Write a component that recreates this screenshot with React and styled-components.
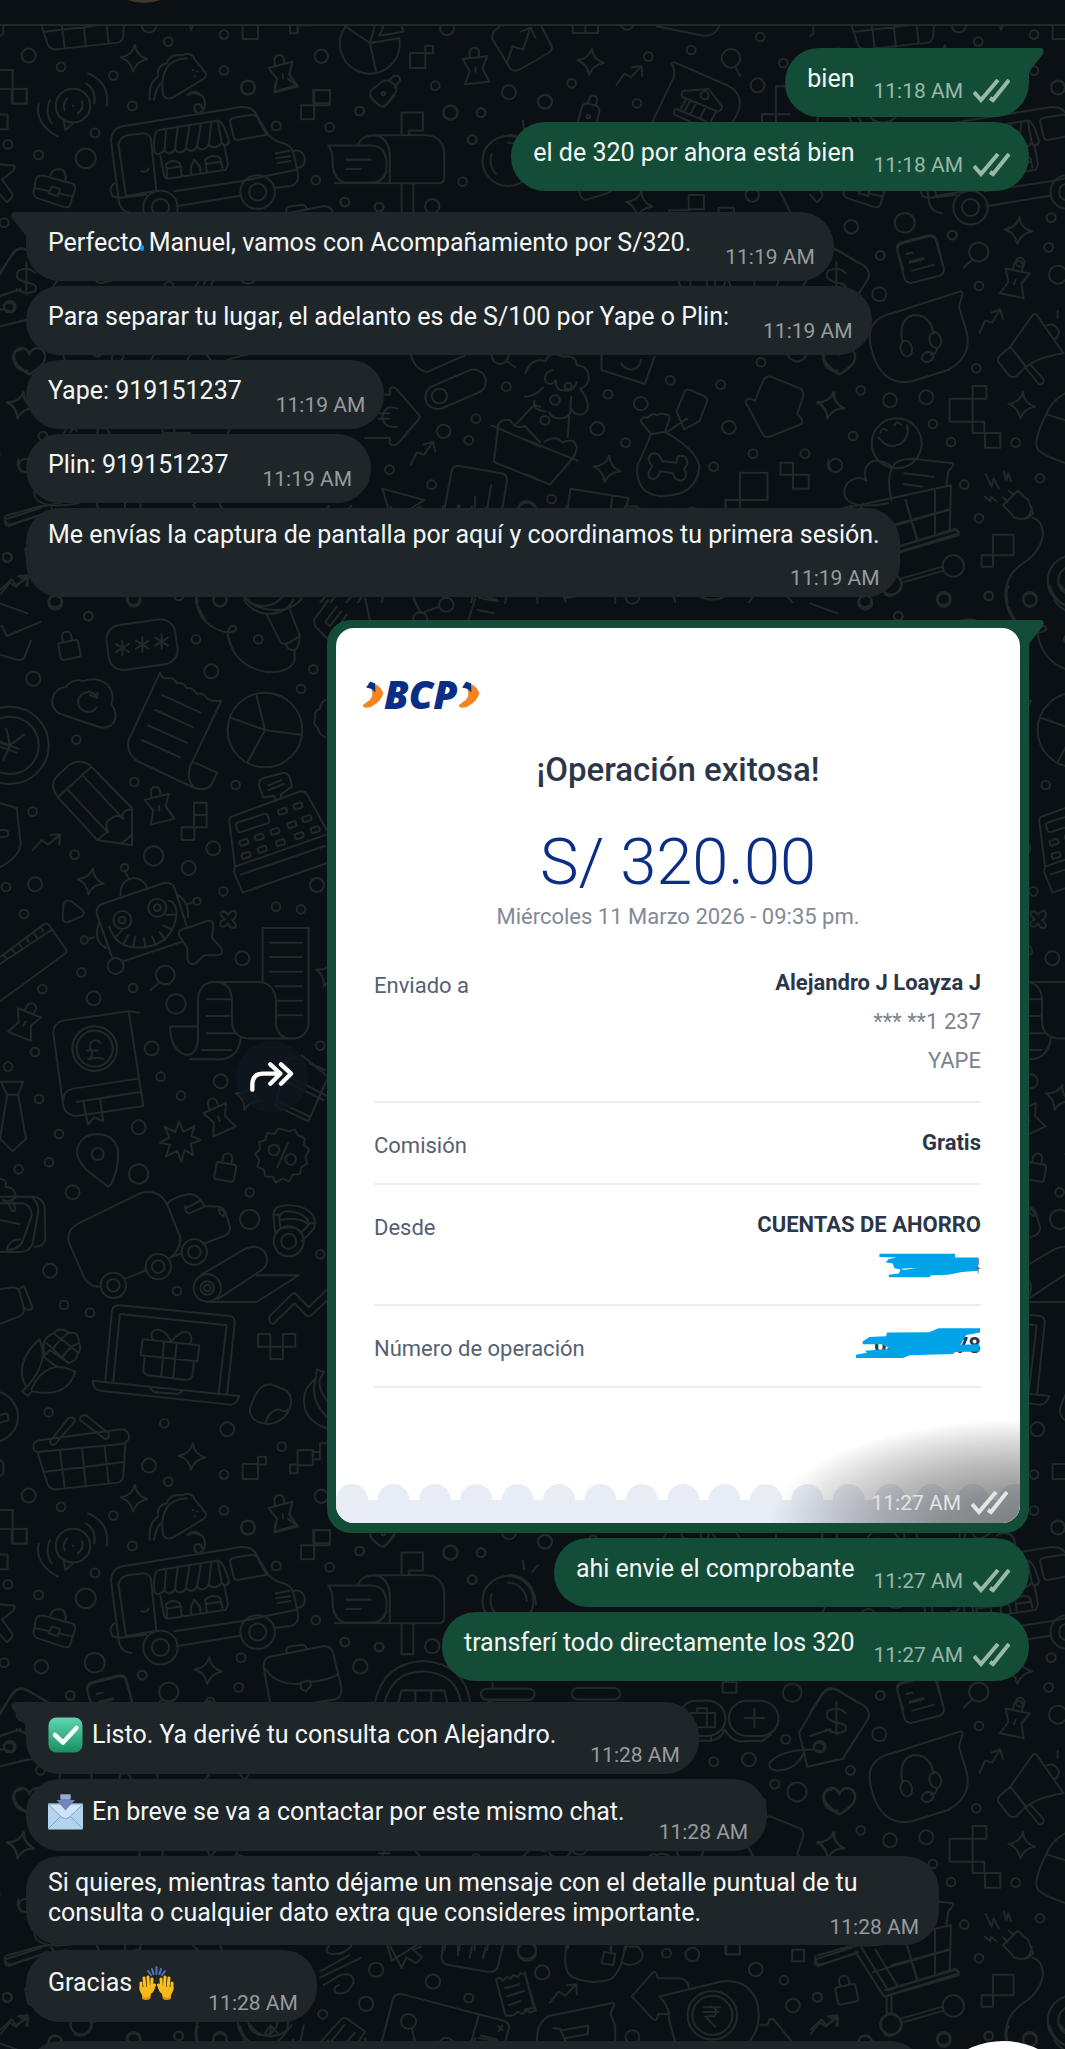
import React from "react";
import styled, { createGlobalStyle, css } from "styled-components";

const GlobalStyle = createGlobalStyle`
  * { box-sizing: border-box; }
  body { margin: 0; background: #0b1014; font-family: Roboto, "Liberation Sans", sans-serif; }
`;

const Screen = styled.div`
  position: relative;
  display: flex;
  flex-direction: column;
  height: 100vh;
  overflow: hidden;
  background: #0b1014;
  color: #f4f6f6;
`;

const TopBar = styled.header`
  position: relative;
  flex: none;
  display: flex;
  align-items: flex-end;
  height: 26px;
  padding: 0 0 21px 98px;
  overflow: hidden;
  background: #0b1014;
  border-bottom: 2px solid #22272a;
`;

const Avatar = styled.span`
  flex: none;
  width: 92px;
  height: 92px;
  border-radius: 50%;
  background: #42352a;
`;

const Wallpaper = styled.svg`
  position: absolute;
  inset: 0;
  width: 100%;
  height: 100%;
  fill: none;
  stroke: #23282b;
  stroke-width: 6;
  stroke-linecap: round;
  stroke-linejoin: round;
`;

const Thread = styled.main`
  position: relative;
  flex: 1;
  min-height: 0;
  display: flex;
  flex-direction: column;
  gap: 21px;
  padding: 22px 36px 0 26px;
`;

const Group = styled.section`
  flex: none;
  display: flex;
  flex-direction: column;
  gap: 5px;
  align-items: ${(p) => (p.$out ? "flex-end" : "flex-start")};
`;

const layouts = {
  out: css`padding: 16px 19px 14px 22px;`,
  in: css`padding: 16px 19px 12px 22px;`,
  emoji: css`padding: 18px 19px 7px 22px;`,
  stacked: css`padding: 12px 20px 7px 22px; flex-direction: column;`,
  wrapped: css`padding: 12px 20px 6px 22px; display: grid; max-width: calc(100% - 90px);`,
};

const metaOffsets = { out: 15, in: 17, emoji: 23, stacked: 16, wrapped: 47 };

const BubbleBox = styled.article`
  position: relative;
  display: flex;
  align-items: flex-start;
  column-gap: ${(p) => (p.$out ? 19 : 34)}px;
  border-radius: 34px;
  background: ${(p) => (p.$out ? "#144d37" : "#1f2629")};
  ${(p) => layouts[p.$layout]}
  ${(p) => p.$tail && (p.$out ? "border-top-right-radius: 0;" : "border-top-left-radius: 0;")}
`;

const TailShape = styled.svg`
  position: absolute;
  top: 0;
  width: 16px;
  height: 26px;
  fill: ${(p) => (p.$out ? "#144d37" : "#1f2629")};
  ${(p) => (p.$out ? "left: calc(100% - 1px);" : "right: calc(100% - 1px); transform: scaleX(-1);")}
`;

const Words = styled.p`
  margin: 0;
  font-size: 25px;
  line-height: 30px;
  ${(p) => p.$fill && "grid-area: 1 / 1;"}
`;

const WithIcon = styled.span`
  display: flex;
  align-items: center;
  height: 30px;
  gap: ${(p) => p.$gap}px;
`;

const Meta = styled.span`
  display: flex;
  align-items: center;
  gap: 10px;
  margin-top: ${(p) => p.$offset}px;
  font-size: 21px;
  line-height: 24px;
  white-space: nowrap;
  color: ${(p) => p.$color};
  ${(p) => p.$corner && "align-self: flex-end; justify-self: end;"}
  ${(p) => p.$fill && "grid-area: 1 / 1;"}
`;

const TickSvg = styled.svg`
  width: 37px;
  height: 24px;
  fill: none;
  stroke: currentColor;
  stroke-width: 4;
`;

const Anchor = styled.span`
  position: relative;
`;

const PenDot = styled.span`
  position: absolute;
  right: -2px;
  bottom: 6px;
  width: 4px;
  height: 6px;
  border-radius: 2px;
  background: #0c9be0;
`;

const Ticks = () => (
  <TickSvg viewBox="0 0 37 24" role="img" aria-label="Entregado">
    <path d="M1 13 8 21 25 1M17 19l3 2L36 1" />
  </TickSvg>
);

const Tail = ({ out }) => (
  <TailShape $out={out} viewBox="0 0 16 26" aria-hidden="true">
    <path d="M0 0H13Q17 1 15 6L4 20Q1 23 1 26H0Z" />
  </TailShape>
);

function Bubble({ out, tail, layout, time, children }) {
  const kind = layout || (out ? "out" : "in");
  const fill = kind === "wrapped";
  return (
    <BubbleBox $out={out} $tail={tail} $layout={kind}>
      {tail && <Tail out={out} />}
      <Words $fill={fill}>{children}</Words>
      <Meta
        $offset={metaOffsets[kind]}
        $color={out ? "#98b8a9" : "#979b9d"}
        $corner={fill || kind === "stacked"}
        $fill={fill}
      >
        <time>{time}</time>
        {out && <Ticks />}
      </Meta>
    </BubbleBox>
  );
}

/* ---------- emoji ---------- */

const EmojiSvg = styled.svg`
  flex: none;
  width: 35px;
  height: 36px;
`;

const CheckEmoji = () => (
  <EmojiSvg viewBox="0 0 35 36" role="img" aria-label="✅">
    <defs>
      <linearGradient id="mint" x2="0" y2="1">
        <stop offset="0" stopColor="#5fd6b0" />
        <stop offset="1" stopColor="#16915f" />
      </linearGradient>
    </defs>
    <rect x="0.5" y="0.5" width="34" height="35" rx="8" fill="url(#mint)" />
    <path d="M7 18 15 25.500 28.500 11" fill="none" stroke="#fff" strokeWidth="4.500" strokeLinecap="round" strokeLinejoin="round" />
  </EmojiSvg>
);

const MailEmoji = () => (
  <EmojiSvg viewBox="0 0 35 36" role="img" aria-label="📩">
    <rect y="9.500" width="35" height="26" rx="1" fill="#b4d4ee" />
    <path d="M0 35 13 22M35 35 22 22" stroke="#7ba4cc" fill="none" />
    <path d="M0 10 14 23.500Q17.500 26 21 23.500L35 10Z" fill="#cfe5f7" stroke="#7ba4cc" />
    <path d="M12.500 0.500H22.500V6H27L17.500 16.500 8.500 6H12.500Z" fill="#7285b8" />
    <path d="M12.500 0.500H22.500V5H12.500Z" fill="#9aa9d2" />
  </EmojiSvg>
);

const HandsEmoji = () => (
  <EmojiSvg viewBox="0 0 35 36" role="img" aria-label="🙌">
    <g stroke="#5274b8" strokeWidth="2" strokeLinecap="round">
      <path d="M17.500 2V9M22 4 20.500 9M13 4 14.500 9M26 6 23 10M9 6 12 10" />
    </g>
    {[0, 1].map((side) => (
      <g key={side} transform={side ? "translate(35 0) scale(-1 1)" : undefined}>
        <path
          d="M2 18V24M5 13 6 23M9 12 9.500 22M13 14 12.500 23M15.500 20 13 26"
          stroke="#fcc21b"
          strokeWidth="3"
          strokeLinecap="round"
        />
        <path d="M0.500 22H14L16 23Q14 27 12 29L11 34Q7 35.500 3.500 34L3 30Q0 26 0.500 22Z" fill="#f9b916" />
        <path d="M3.500 32Q7 33.500 11.500 31.500L11 34Q7 35.500 3.500 34Z" fill="#df8a12" />
      </g>
    ))}
  </EmojiSvg>
);

/* ---------- receipt ---------- */

const PhotoRow = styled.div`
  display: flex;
  align-items: center;
  gap: 19px;
  margin-top: 2px;
`;

const ForwardButton = styled.button`
  display: grid;
  place-items: center;
  width: 72px;
  height: 72px;
  padding: 0;
  border: 0;
  border-radius: 50%;
  background: #0f181fcc;
  color: #fff;
`;

const PhotoBubble = styled.article`
  position: relative;
  width: 702px;
  padding: 8px 9px 10px;
  border-radius: 24px 0 24px 24px;
  background: #144d37;
`;

const Receipt = styled.div`
  position: relative;
  display: flex;
  flex-direction: column;
  overflow: hidden;
  padding-top: 46px;
  border-radius: 18px;
  background: #fff;
  color: #2b3648;
`;

const Brand = styled.div`
  display: flex;
  align-items: center;
  padding-left: 26px;
  height: 40px;
  font: italic 800 39px/40px "Open Sans", sans-serif;
  color: #0a2d86;
`;

const Swoosh = styled.svg`
  width: 22px;
  height: 30px;
`;

const Heading = styled.h2`
  margin: 36px 0 0;
  font-size: 33px;
  font-weight: 500;
  line-height: 40px;
  text-align: center;
`;

const Amount = styled.p`
  margin: 36px 0 0;
  font-size: 65px;
  font-weight: 300;
  line-height: 72px;
  text-align: center;
  color: #0a2d86;
`;

const When = styled.p`
  margin: 5px 0 12px;
  font-size: 22px;
  line-height: 28px;
  text-align: center;
  color: #838995;
`;

const Details = styled.dl`
  margin: 0 39px 0 38px;
`;

const DetailRow = styled.div`
  display: flex;
  justify-content: space-between;
  padding: 20px 0 21px;
  border-bottom: 2px solid #ededee;
  font-size: 22px;
  line-height: 39px;
`;

const Label = styled.dt`
  padding-top: 3px;
  margin-bottom: -3px;
  color: #566072;
`;

const Values = styled.dd`
  margin: 0;
  display: flex;
  flex-direction: column;
  align-items: flex-end;
`;

const Value = styled.span`
  height: 39px;
  font-weight: ${(p) => (p.$strong ? 700 : 400)};
  color: ${(p) => (p.$strong ? "#2b3648" : "#7b8290")};
`;

const Hidden = styled.span`
  position: relative;
  display: flex;
  justify-content: space-between;
  width: ${(p) => p.$width}px;
  height: 39px;
  padding-left: 18px;
`;

const Scribble = styled.svg`
  position: absolute;
  left: 0;
  top: ${(p) => p.$top}px;
  width: 100%;
  height: ${(p) => p.$height}px;
  fill: #00a2e8;
`;

const Scallops = styled.svg`
  display: block;
  width: 100%;
  height: 39px;
  margin-top: 96px;
  fill: #e8edf5;
`;

const Shade = styled.div`
  position: absolute;
  right: 0;
  bottom: 0;
  width: 250px;
  height: 104px;
  background: radial-gradient(ellipse 100% 100% at 100% 100%, #0007 0%, #0006 30%, #0004 58%, #0002 80%, #0000 100%);
`;

const PhotoMeta = styled(Meta)`
  position: absolute;
  right: 12px;
  bottom: 8px;
`;

const SwooshMark = () => (
  <Swoosh viewBox="126 208 64 88" preserveAspectRatio="none" aria-hidden="true">
    <path d="M163 221Q182 231 188 250 182 276 150 291L136 292Q126 288 129 284L150 268Q158 259 155 243Z" fill="#f5831f" />
    <path d="M138 233 150 215 164 221 165 247Q152 234 138 233Z" fill="#0a2d86" />
  </Swoosh>
);

function ReceiptPhoto() {
  return (
    <PhotoBubble>
      <Tail out />
      <Receipt>
        <Brand>
          <SwooshMark />
          BCP
          <SwooshMark />
        </Brand>
        <Heading>¡Operación exitosa!</Heading>
        <Amount>S/ 320.00</Amount>
        <When>Miércoles 11 Marzo 2026 - 09:35 pm.</When>
        <Details>
          <DetailRow>
            <Label>Enviado a</Label>
            <Values>
              <Value $strong>Alejandro J Loayza J</Value>
              <Value>*** **1 237</Value>
              <Value>YAPE</Value>
            </Values>
          </DetailRow>
          <DetailRow>
            <Label>Comisión</Label>
            <Values><Value $strong>Gratis</Value></Values>
          </DetailRow>
          <DetailRow>
            <Label>Desde</Label>
            <Values>
              <Value $strong>CUENTAS DE AHORRO</Value>
              <Hidden $width={103}>
                <Scribble $top={9} $height={25} viewBox="1172 460 218 76" preserveAspectRatio="none" aria-hidden="true">
                  <path d="M1175 462H1335V474H1384V514L1350 518 1320 526 1285 528 1280 534H1195V526L1216 522 1220 510 1207 506 1203 492 1188 488 1195 478 1212 474 1175 472Z" />
                  <path d="M1222 508 1256 505 1226 512ZM1213 479 1190 477Z" fill="#fff" />
                  <path d="M1385 476V496M1379 507H1389M1384 500V522" stroke="#59606e" strokeWidth="2" />
                </Scribble>
              </Hidden>
            </Values>
          </DetailRow>
          <DetailRow>
            <Label>Número de operación</Label>
            <Values>
              <Hidden $width={125}>
                <Value $strong>03</Value>
                <Value $strong>78</Value>
                <Scribble $top={2} $height={30} viewBox="1127 689 262 91" preserveAspectRatio="none" aria-hidden="true">
                  <path d="M1192 703 1280 702 1300 690H1387V703L1358 710 1346 740 1385 738V760L1335 762 1330 768 1240 772 1225 780H1127V770L1150 764 1146 758 1200 752 1180 738H1141V730L1155 716 1190 714Z" />
                </Scribble>
              </Hidden>
            </Values>
          </DetailRow>
        </Details>
        <Scallops viewBox="0 0 684 39" preserveAspectRatio="none" aria-hidden="true">
          <rect y="16" width="684" height="23" />
          {Array.from({ length: 17 }, (_, i) => (
            <circle key={i} cx={16 + i * 41.4} cy="16" r="16" />
          ))}
        </Scallops>
        <Shade />
        <PhotoMeta $offset={0} $color="#e2e4e6">
          <time>11:27 AM</time>
          <Ticks />
        </PhotoMeta>
      </Receipt>
    </PhotoBubble>
  );
}

const NextBubble = styled.div`
  margin-top: 14px;
  width: 898px;
  max-width: 100%;
  height: 88px;
  border-radius: 34px;
  background: #1f2629;
`;

const ScrollButton = styled.button`
  position: absolute;
  right: -18px;
  bottom: -152px;
  width: 160px;
  height: 160px;
  border: 0;
  border-radius: 50%;
  background: #fff;
`;

/* ---------- wallpaper doodles ---------- */

const Rings = ({ at }) => at.map(([x, y, r], i) => <circle key={i} cx={x} cy={y} r={r || 13} />);

const place = (x, y, a = 0) => `translate(${x} ${y}) rotate(${a})`;

const shapes = {
  pin: "M-39-28 35-36 20 0 41 40-32 48-18 8ZM-18-32V-50A15 17 0 0 1 10-52V-36M0-4V10",
  spark: "M0-40Q6-8 40 0 8 8 0 40-8 8-40 0-6-8 0-40Z",
  trend: "M-42 22-14-8 4 6 40-24M12-24 40-24 38 6",
  lock: "M-30-16Q-30-24-22-24H22Q30-24 30-16V20Q30 28 22 28H-22Q-30 28-30 20ZM-14-24V-40A14 14 0 0 1 14-40V-24",
  lens: "M28 0A28 28 0 1 1-28 0A28 28 0 1 1 28 0M-18 22-44 46",
  heart: "M0 40Q-46 12-46-10A23 23 0 0 1 0-20A23 23 0 0 1 46-10Q46 12 0 40Z",
};

const Marks = ({ kind, at }) =>
  at.map(([x, y, a], i) => <path key={i} d={shapes[kind]} transform={place(x, y, a)} />);

const Wheel = ({ x, y, r = 50 }) => (
  <>
    <circle cx={x} cy={y} r={r} />
    <circle cx={x} cy={y} r={r / 2} />
  </>
);

function Tile() {
  return (
    <g id="doodles">
      <g transform="translate(0 600) scale(0.3333)">
        <Rings
          at={[[166, 8, 21], [265, 49], [402, 0, 20], [588, 118], [634, 214, 21], [775, 118], [100, 236, 21], [229, 419], [403, 546], [98, 635], [903, 267], [940, 208], [707, 555], [224, 764], [461, 768, 29], [566, 804, 21], [640, 745, 21], [670, 874], [105, 853, 21], [18, 861], [72, 942], [951, 855, 21], [828, 920], [903, 928], [727, 1075, 21], [347, 1098, 24], [244, 1117], [399, 1164], [281, 1195, 21], [528, 1212, 29], [127, 1167], [455, 1345, 21], [961, 1337], [660, 0, 20], [795, 390, 112], [30, 436, 116], [30, 436, 86]]}
        />
        <Marks kind="pin" at={[[477, 622, -8], [75, 1268, 28]]} />
        <Marks kind="spark" at={[[272, 844, 10], [985, 1122, 20]]} />
        <Marks kind="trend" at={[[140, 728]]} />
        <Marks kind="lock" at={[[208, 148, -12]]} />
        <Marks kind="lens" at={[[496, 1125]]} />
        <path d="M0 10 82 40M5 77 20 108 124 65M0 164 55 180Q70 182 74 170L93 122" />
        <rect x="322" y="66" width="208" height="136" rx="44" transform="rotate(-8 426 134)" />
        <path d="M367 122V166M348 132 386 156M386 132 348 156M427 112V156M408 122 446 146M446 122 408 146M485 103V147M466 113 504 137M504 113 466 137" />
        <path d="M190 345A42 42 0 0 1 196 262Q220 232 250 244 290 228 322 254 346 280 334 314 355 340 342 366 330 386 300 382ZM290 290A30 30 0 1 0 290 322M270 285 292 294V278" />
        <path d="M480 218 386 420Q378 458 410 482L570 558Q620 580 636 550L652 518 584 488M480 218Q486 240 508 234 526 234 530 250 550 246 560 264 580 262 590 282 610 276 622 296 640 306 664 302L570 500Q560 540 580 560M488 286 602 338M466 330 580 382M444 376 560 428M426 420 540 472" />
        <path d="M795 390 770 288M795 390 694 354M795 390 743 486M795 390 906 405" />
        <path d="M19 386 30 436 72 404M30 436 0 424M10 480 30 436M0 440 50 458M4 430 56 446" />
        <path d="M174 592Q150 560 166 534L208 494Q240 474 270 496L396 624V736L292 720ZM174 592 274 500M204 570 324 698M246 524 366 652M292 720 324 694Q310 664 334 656 350 640 370 656 360 630 396 628M366 730 396 704" />
        <path d="M582 608H620V682H582ZM582 645H620M545 682H583V720H545Z" />
        <path d="M705 800 688 664Q686 652 700 648L896 576Q914 570 922 584L980 690M705 800 980 704M705 800 702 815 728 878 990 786M722 824 975 738M828 602 822 588 790 592 778 560Q774 538 792 534L846 520Q864 516 870 534L876 560 842 584 846 594M806 556 844 540M806 570 852 552" />
        <rect x="708" y="654" width="100" height="30" rx="8" transform="rotate(-18 758 669)" />
        {[[848, 634], [894, 618], [732, 727], [778, 711], [825, 694], [876, 674], [921, 656], [738, 766], [787, 748], [842, 728], [898, 707], [946, 689]].map(([x, y]) => (
          <rect key={x} x={x - 13} y={y - 8} width="26" height="16" rx="5" transform={`rotate(-18 ${x} ${y})`} />
        ))}
        <path d="M338 1078 290 940Q288 920 306 912L490 850Q514 844 524 864L562 984M370 1084 544 1026M362 886Q360 840 400 834 430 836 440 860M374 812 386 836M298 968Q276 1020 318 1044M282 1012 262 1018M530 884Q566 900 564 952M564 912 582 906M328 980Q350 1050 430 1042 520 1032 530 940 528 904 506 902M346 1012 366 992M372 1030 384 1006M400 1038 406 1010M436 1042 432 1014M468 1036 456 1010M496 1020 478 996M516 990 490 976M528 944 498 944" />
        <Rings at={[[374, 803, 11], [253, 1020, 11], [591, 904, 11], [367, 960, 27], [472, 923, 27], [367, 960, 10], [472, 923, 10]]} />
        <path d="M562 984 618 964Q640 956 640 980L636 1014 662 1042Q674 1064 652 1066L612 1066 590 1088Q572 1100 562 1080V1044L538 1008Q530 988 562 984Z" />
        <path d="M190 914Q196 896 214 904L248 930Q256 942 244 950L204 966Q186 970 188 950Z" />
        <path d="M684 944Q704 922 708 942 708 956 696 960 714 974 704 984 690 986 684 970 674 986 662 978 656 964 676 958 656 944 664 936 676 930 684 944Z" />
        <path d="M0 1072 130 974Q140 966 150 980L198 1048Q202 1056 194 1062L0 1204M0 1092 154 990M12 1066 20 1078M36 1048 46 1060M58 1032 66 1044M80 1016 88 1028M102 1000 110 1012M124 984 130 994" />
        <path d="M788 1144V984H926V1270Q920 1316 874 1316 830 1314 828 1270V1200Q822 1148 776 1146H640Q596 1150 594 1200V1280 1320Q588 1370 556 1364 512 1350 510 1280H594M650 1146Q696 1150 696 1204V1260Q696 1316 754 1316H874M810 1028H906M810 1071H906M810 1115H906M826 1159H906M830 1202H906M830 1246H906M620 1198H690M620 1248H690M620 1300H708M722 1316Q714 1376 660 1378H570M606 1350H694" />
        <path d="M588 0Q596 80 684 98 720 92 704 78 684 74 684 108 704 200 800 216 870 220 884 180V150M732 0Q760 40 806 42 860 40 880 0M800 44 842 128Q856 136 870 126L900 108 870 30M858 134Q866 154 884 150 898 144 898 112" />
        <path d="M0 610 50 624 62 730Q60 770 0 802M0 690H18Q26 692 24 706 20 712 0 712" />
        <path d="M985 0 942 60 946 80 986 120M1010 20 976 66 990 78 1024 34M1040 44 1010 88" />
        <path d="M976 300Q960 310 960 326 940 334 946 354 936 370 954 384 956 404 976 412" />
        <path d="M418 1238 386 1234 188 1262Q160 1270 160 1300L190 1520Q200 1548 230 1548L430 1518 386 1234M190 1500Q190 1472 220 1466L415 1436M230 1506 420 1476M250 1504 264 1574 282 1552 310 1564 300 1498" />
        <circle cx="284" cy="1346" r="67" />
        <circle cx="284" cy="1346" r="54" />
        <path d="M302 1330Q290 1314 274 1326 264 1340 276 1356 280 1374 264 1378 290 1372 310 1376M262 1352H294" />
      </g>

      <g transform="translate(0 1040) scale(0.3333)">
        <Rings
          at={[[105, 36], [24, 80], [117, 177], [482, 110], [662, 124, 21], [543, 167], [416, 262, 21], [177, 282], [147, 367], [56, 388], [416, 402, 29], [218, 457, 21], [749, 457], [749, 538, 29], [150, 692, 21], [531, 753], [192, 795], [270, 818], [146, 1117], [493, 1150], [682, 1168, 21], [447, 1277, 21], [505, 1325], [672, 1304], [845, 1220], [86, 1367, 21], [183, 1401], [340, 1427], [672, 1412], [744, 1463, 21], [964, 1369, 20], [961, 643], [293, 342, 18], [822, 330, 16], [872, 358, 16], [-22, 1130, 76]]}
        />
        <Marks kind="pin" at={[[656, 234, -18], [848, 1426, -8]]} />
        <Marks kind="spark" at={[[745, 172, 18], [576, 1250, 4], [402, 1375, 4]]} />
        <Marks kind="lock" at={[[676, 394, 10]]} />
        <path d="M2 125H70L54 164H22ZM22 164 0 296 38 334 78 296 54 164" />
        <path d="M324 440 260 390Q222 350 234 320 248 282 294 282 342 284 354 330 358 380 334 432Z" />
        <path d="M537 244 550 276 584 258 574 288 602 300 572 312 580 346 554 330 544 366 532 332 498 350 510 314 480 308 508 292 494 260 526 276Z" />
        <path d="M848 268 866 274 884 268 894 286 914 294 912 314 928 330 916 350 922 370 904 382 900 402 878 404 868 424 848 416 828 428 818 410 796 410 792 390 772 380 778 360 766 342 780 328 778 306 796 300 802 278 824 282 834 266ZM864 310 832 382" />
        <path d="M236 550 420 460Q480 442 504 500L540 590Q546 624 510 654M236 550Q196 570 208 610L254 716Q272 742 302 740M376 716 440 690M502 494Q510 474 566 462 596 462 614 498L656 500Q672 502 678 520L690 560Q692 578 676 586L610 612M512 652 546 640M556 506 600 482M556 498Q554 522 568 520L614 500M656 508Q656 524 672 528 676 510 660 508" />
        <Wheel x={340} y={736} r={38} />
        <Wheel x={475} y={680} r={38} />
        <Wheel x={583} y={636} r={38} />
        <path d="M820 524Q822 494 868 496 930 498 944 538 946 552 942 566L906 604M826 582 820 524H838M944 548 924 552Q900 530 838 540 836 520 856 514 910 514 928 548M838 540 842 566Q860 560 888 564L906 576 928 552" />
        <Wheel x={866} y={604} r={45} />
        <path d="M604 704 730 630Q770 608 794 636 812 668 786 690L652 778M622 786H770L896 706H770" />
        <Wheel x={622} y={744} r={41} />
        <circle cx="622" cy="744" r="10" />
        <path d="M990 740 926 802 888 762Q882 756 874 764L808 830Q806 850 820 852L884 790 918 826Q926 832 934 826L1000 764" />
        <path d="M774 882H811V920H774ZM849 882H886V920H849ZM811 920H849V957H811Z" />
        <path d="M316 1020 336 812Q340 794 360 796L690 828Q706 832 704 850L682 1060M340 1022 360 822 680 856 656 1058M278 1022 718 1068Q710 1094 690 1094L300 1052Q278 1046 278 1022ZM446 1040 462 1056 534 1062 548 1052M428 898 598 916 592 964 422 946ZM434 948 430 990Q430 1002 446 1006L560 1020Q576 1018 578 1004L582 962M492 906 484 1010M530 910 520 1014M514 904Q490 862 464 870 446 882 460 900M514 904Q546 866 568 880 580 894 570 912" />
        <path d="M78 1040Q40 970 118 898 150 960 84 1038L66 1054 84 1068 96 1054Q200 1076 226 996 140 950 94 1048M134 940Q120 896 160 880 180 858 210 880 234 872 236 904 248 930 232 940 234 960 206 970L140 910M160 880 200 910 236 940M206 970 150 930 130 950 170 980M204 880Q176 900 160 926M236 910Q206 920 186 954" />
        <path d="M780 1046Q804 1022 840 1044 872 1050 874 1086 868 1130 830 1146 796 1160 764 1140 740 1120 756 1090 764 1062 780 1046ZM796 1150Q806 1112 836 1108 858 1118 864 1108" />
        <path d="M950 988 972 996 960 1016Q950 1060 1010 1110M950 988 948 1016Q900 1050 916 1110 934 1160 1010 1172M946 1020Q930 1080 980 1130" />
        <path d="M112 1236Q94 1230 102 1210 108 1202 124 1200L364 1168Q384 1168 388 1190 384 1208 366 1212ZM112 1236 142 1330Q150 1350 170 1348L356 1328Q368 1322 370 1308L376 1214M180 1234 194 1344M246 1226 258 1340M314 1220 326 1330M130 1296 372 1266M150 1204 206 1134Q220 1128 226 1142L166 1212Q152 1220 150 1204ZM258 1126 326 1180Q330 1196 316 1198L240 1140Q238 1124 258 1126Z" />
        <path d="M728 1272H774V1317H728ZM774 1250H798V1274H774ZM870 1274H893V1300H870ZM893 1230H938V1276H893ZM938 1236H960V1258H938M960 1236V1210H1000" />
        <path d="M0 1410H38V1467H80V1510M0 1467H38V1510M940 1470H990V1510H940Z" />
        <path d="M450 1500Q444 1450 474 1430 470 1396 500 1390 510 1360 546 1366 576 1354 584 1378L618 1420Q620 1432 606 1440L520 1492Q500 1502 490 1486 480 1440 500 1404 520 1376 560 1376M562 1486Q580 1472 610 1490M462 1500Q466 1470 482 1450" />
        <path d="M578 1410 579 1411M592 1414 593 1415M584 1428 585 1429" />
        <path d="M0 470H100Q130 474 134 500L136 600Q130 620 104 620M96 470Q118 490 114 520L98 610Q90 636 60 636H0M0 490H70Q98 500 94 530L70 598Q60 630 20 630 26 600 60 598M0 540 58 552M24 486 34 510Q44 520 46 506L38 484M0 416Q24 420 16 440 44 440 48 470 30 490 8 480" />
        <path d="M0 748 40 742Q56 744 60 760L72 806Q72 822 60 828L0 852M56 748 72 738 98 804 90 810 70 806" />
        <path d="M0 1126 16 1120Q28 1124 24 1142L0 1148M0 1258 10 1270V1302L0 1308" />
        <path d="M860 60 905 46 985 110 925 244 826 196 860 60M830 90 985 170M850 120 970 180M930 70 975 90M836 186 930 230" />
      </g>

      <g transform="translate(0 80) scale(0.3444 0.3374)">
        <Rings
          at={[[384, 77], [276, 157], [23, 191], [112, 222], [249, 232, 29], [802, 136], [720, 22, 20], [917, 297], [120, 435, 20], [275, 423, 29], [413, 460], [700, 408], [693, 496], [204, 520], [957, 140], [1044, 92], [1308, 97, 21], [1397, 97], [1371, 177], [1001, 362], [1101, 377], [1255, 374, 21], [1046, 434, 21], [12, 423], [610, 540], [21, 1415], [160, 1545, 18], [235, 1495, 30], [388, 1538, 18], [519, 1529], [1092, 1333, 21], [1257, 1368, 21], [1361, 1417], [1063, 1434, 21], [937, 1465], [1530, 1280, 27], [1186, 1486, 22]]}
        />
        <Marks kind="spark" at={[[605, 446, 4], [60, 964, 14]]} />
        <Marks kind="lens" at={[[490, 510]]} />
        <circle cx="212" cy="76" r="50" />
        <path d="M184 118 190 148 214 126M212 76 213 77M188 90A30 30 0 0 1 196 54M238 64A28 28 0 0 1 226 98M150 128Q130 100 144 60M168 168Q100 130 112 70M250 10Q280 30 274 70M256-20Q320 10 310 76" />
        <path d="M382 394Q352 392 346 364L322 180Q324 144 352 138L700 80Q730 78 742 98L780 164Q800 184 830 190 850 200 854 224L866 280Q866 310 844 314L800 320M512 374 700 342M344 350 424 340M506 330 700 300 860 266M344 192Q348 170 370 164L416 158Q432 158 438 174L454 328 366 344ZM332 306Q314 320 326 344L344 350M850 212Q876 200 886 234 886 256 866 260M410 270Q424 276 432 262" />
        <path d="M448 214Q444 150 462 148L632 120Q648 122 664 178 668 192 650 196M448 214Q460 228 478 208 490 228 508 206 524 226 540 202 556 220 572 198 590 216 606 192 624 210 644 186 654 202 664 184M482 146 478 208M516 140 508 206M550 134 540 202M584 128 572 198M614 124 606 192M632 120 644 186M466 226 476 282Q480 294 492 292L656 266 662 250 652 196M486 290 482 250Q500 232 522 246L528 284M488 262 526 256M556 278Q550 258 560 246L564 236 572 246Q584 258 582 274M600 270 596 236Q620 216 640 232L646 260M600 248 642 242" />
        <path d="M668 124Q668 114 680 112L726 104Q740 100 746 110L774 162 690 178Q680 178 678 166ZM800 218 840 210M802 232 842 226M806 246 844 240" />
        <Wheel x={466} y={378} />
        <Wheel x={748} y={332} />
        <path d="M550 40Q576 24 594 60 600 92 576 98 560 92 566 76 580 64 588 84" />
        <path d="M104 294Q110 280 126 284L208 306Q220 310 218 324L204 370Q200 380 186 376L108 350Q96 346 98 332ZM146 284Q150 264 172 264 194 268 190 298M102 320 144 330M172 336 212 346M150 316 174 322 168 344 142 336Z" />
        <path d="M0 250 42 254Q44 264 36 272L6 294 36 338Q38 350 20 362L0 340M0 102H22V146H0M34 26H78V70H34Z" />
        <path d="M0 570 40 512Q60 490 90 510L140 542M270 560 252 500Q252 488 262 482L344 460Q360 458 364 470L386 550M284 514 298 512M290 538 328 528" />
        <path d="M784 540 766 440Q764 412 780 406L938 374Q958 372 966 390L992 500Q992 526 972 532L880 546M770 440Q800 490 876 486M900 480Q950 476 978 460M832 392Q828 376 846 374L876 370Q888 370 890 382M872 482 900 476 902 492 888 508 874 500Z" />
        <path d="M912 30H958V75H912ZM874 75H912V116H874Z" />
        <path d="M1132 305V220Q1126 166 1084 164H1240Q1288 168 1290 220V290Q1290 306 1274 306H972M1040 190Q1050 166 1084 164M952 194H1080Q1118 196 1122 240V270Q1112 304 1080 304H1000Q964 290 966 240 966 210 952 194ZM1006 236H1076M1006 264H1048M1166 164V96H1228V150H1188V164M1166 306V398H1200V306" />
        <circle cx="1475" cy="240" r="74" />
        <path d="M1475 186A54 54 0 0 1 1529 240M1428 220A54 54 0 0 0 1440 278M1480 162Q1550 170 1556 250M1518 120 1522 146M1562 134 1546 154" />
        <path d="M1088 545Q1110 424 1230 418 1350 426 1366 545M1116 545Q1136 450 1230 448 1330 456 1338 545M1156 545 1166 505H1290L1300 545M1206 505V545M1252 505V545" />
        <rect x="1396" y="500" width="156" height="32" rx="16" />
        <path d="M1430 482V498M1412 545Q1420 534 1440 534H1540M1076 50Q1100 80 1114 80L1146 46M800 10 798 34 860 16 836-4" />
        <path d="M0 640 60 620M0 730 80 710M10 668Q30 652 42 670 38 692 20 682M62 800Q30 800 42 840 56 866 80 862M54 1124Q46 1144 62 1160" />
        <path d="M16 1302Q10 1316 24 1322L140 1280 M16 1302 120 1268M2 1510 34 1480 46 1498 80 1476M60 1476H82L76 1500" />
        <path d="M955 1262Q940 1280 960 1286 1000 1290 1020 1262M930 1338 1014 1290M930 1356 1048 1298M940 1378 990 1348Q1030 1340 1026 1372 1006 1414 974 1400 964 1386 984 1378" />
        <path d="M1134 1264 1166 1328 1180 1296 1208 1314 1226 1296 1200 1274 1222 1264M1286 1262 1282 1298Q1286 1316 1300 1318L1420 1340Q1440 1340 1446 1324L1458 1266M1330 1262V1290M1370 1264 1364 1298M1410 1268 1402 1300M1440 1362 1452 1356 1460 1366 1472 1354 1482 1360 1490 1348 1504 1354 1512 1342 1524 1348 1556 1454 1540 1460 1530 1452 1516 1464 1504 1458 1490 1468 1468 1470ZM1466 1388 1508 1376M1472 1412 1522 1396M1478 1438 1510 1426" />
        <path d="M1108 1548 1142 1416Q1150 1402 1170 1406L1462 1484Q1480 1490 1478 1506L1466 1550M1196 1508 1206 1548M1390 1468 1368 1548M1446 1500 1460 1512M1458 1498 1448 1514M1396 1528 1442 1540" />
        <path d="M930 1548 990 1480Q1000 1472 1010 1480L1060 1516 1040 1548M1000 1496 960 1548M1030 1520 1006 1548M576 1500Q566 1520 574 1548M696 1498Q706 1540 746 1560 830 1590 874 1540L882 1498M728 1498Q750 1530 786 1530 830 1526 846 1498M770 1520 786 1498 806 1520M786 1498V1524" />
      </g>

      <g transform="translate(330 15) scale(0.3333)">
        <Rings
          at={[[351, 40, 21], [316, 212], [89, 288], [361, 292, 21], [453, 293], [427, 374], [398, 500], [45, 561], [147, 576], [537, 232, 21], [725, 205], [645, 261, 21], [955, 125], [921, 265], [1084, 105], [1291, 66], [1283, 211, 21], [1360, 144], [1267, 540, 20], [892, 24, 20], [160, 236, 5], [775, 305, 5], [1124, 241, 12]]}
        />
        <Marks kind="pin" at={[[437, 160, 0]]} />
        <Marks kind="spark" at={[[782, 140, 6], [928, 568, 10]]} />
        <Marks kind="trend" at={[[898, 182, -8]]} />
        <path d="M46 34A90 90 0 1 0 208 70L120 84ZM120 84 138 168M120 84 134 34M148 62 160 34M148 62 220 50 216 34" />
        <path d="M240 114H286V159H240ZM286 92H309V115H286ZM124 226 156 200Q166 194 178 198L192 208Q204 216 198 230L170 268Q160 278 146 270L126 250Q116 238 124 226ZM178 196 192 182Q210 178 210 196L194 218" />
        <path d="M486 70 490 50 510 34M486 70 540 160Q554 174 572 162L656 114Q670 104 664 90L634 34M530 146 548 94 580 104 600 40M572 50 602 38 616 68M728 30V54H804V30M766 34V54M980 34 1110 60Q1150 70 1168 34" />
        <path d="M744 320 756 276Q762 262 776 266L796 272Q810 276 808 292L800 320M774 262 780 246Q794 236 802 250L798 272" />
        <path d="M966 322 1030 190Q1038 166 1024 144L1034 142 1190 210Q1250 240 1220 300L1208 322M1058 228Q1050 246 1062 248L1164 290Q1178 286 1176 274L1136 222 1058 228M1070 250 1050 284M1100 262 1082 296M1128 274 1110 310M1158 290 1142 320M1082 254 1064 288M1034 284Q1026 298 1040 302L1090 324M1040 282 1130 320" />
        <circle cx="1203" cy="130" r="28" />
        <path d="M1216 156 1230 182M1380 214H1338V320M1296 320V298H1380" />
        <path d="M748 530Q752 556 770 554L834 534 844 528M1076 540H1122V583H1076ZM1018 600V586H1076M1166 600V578H1212V600M1350 530 1380 590" />
      </g>

      <g transform="translate(825 190) scale(0.3333)">
        <Rings
          at={[[382, 135], [166, 196], [163, 313, 21], [462, 288], [454, 535], [107, 601], [195, 631, 21], [304, 622, 21], [324, 702], [84, 738], [378, 756], [572, 758], [645, 865], [32, 826, 20], [418, 884], [462, 985], [385, 1128, 32], [356, 1227, 21], [491, 1218], [615, 1227, 21], [121, 1238, 20], [220, 1278], [744, 1172, 76], [744, 1172, 44], [699, 254, 27]]}
        />
        <Marks kind="pin" at={[[570, 274, 18]]} />
        <Marks kind="spark" at={[[590, 646, 6]]} />
        <Marks kind="trend" at={[[496, 394, -20]]} />
        <Marks kind="heart" at={[[44, 512, 0]]} />
        <rect x="226" y="148" width="122" height="122" rx="20" transform="rotate(-14 287 209)" />
        <path d="M244 192 260 188M254 218 296 208M262 242 328 224" />
        <path d="M202 370 400 306Q414 300 412 314L402 350 426 430Q440 500 370 540L260 574Q190 588 154 520 116 430 150 396 170 376 202 370ZM232 456Q220 390 262 376 316 370 326 432M338 474Q334 492 318 494" />
        <ellipse cx="244" cy="476" rx="17" ry="24" transform="rotate(-14 244 476)" />
        <ellipse cx="331" cy="450" rx="17" ry="24" transform="rotate(-14 331 450)" />
        <ellipse cx="308" cy="501" rx="18" ry="14" transform="rotate(-24 308 501)" />
        <path d="M556 470 624 374Q630 368 636 376L716 490Q640 500 596 536L574 558Q562 566 552 556L520 516Q516 504 526 496ZM556 470 604 532M604 536 640 580Q656 590 656 568L616 524M666 406Q690 396 702 424 700 440 692 446M698 362V384" />
        <path d="M374 626H443V695H374ZM443 588H484V626H443ZM443 695H478V729H443ZM480 729H526V773H480Z" />
        <path d="M730 605Q680 630 664 672 620 760 640 780 660 800 730 822M668 674 730 694" />
        <circle cx="215" cy="760" r="75" />
        <path d="M246 706Q256 740 226 762 190 780 160 742M166 728Q172 708 186 722M208 706Q216 690 228 704" />
        <path d="M190 940Q80 960 60 920 50 880 90 866 106 860 124 872 110 830 142 814 170 806 200 830 M200 930Q180 860 210 820 230 806 260 806L384 820Q388 826 370 844L364 888M238 850 326 860M236 882 292 890" />
        <path d="M60 955 378 886 374 1022M242 930 276 1050M330 898V1034M200 1006 374 958M180 1080 390 1020Q406 1024 400 1036L180 1100M228 1166 352 1130M232 1178 356 1142M180 1214A34 34 0 1 0 186 1150" />
        <path d="M534 946 578 902 610 930 624 970Q610 990 590 986 570 990 560 972ZM552 902 566 916M534 922 548 936M600 986Q620 974 620 950M624 984Q650 990 654 1030 650 1080 600 1116 530 1160 544 1240L570 1290M482 852 500 890 506 866 522 896M536 844 544 870 550 850 558 874M480 920 496 934 498 920 514 934" />
        <path d="M504 1034H566V1096H504ZM470 1096H504V1130H470Z" />
      </g>

      <g transform="translate(0 350) scale(0.3444 0.3333)">
        <Rings at={[[1470, 110], [1382, 206], [1288, 244, 20], [1361, 271], [1131, 359], [1253, 404], [1276, 138, 22], [1452, 18, 24], [1530, 480, 27]]} />
        <Marks kind="trend" at={[[1226, 310, -18]]} />
        <Marks kind="heart" at={[[85, 34, 0]]} />
        <rect x="1230" y="82" width="186" height="72" rx="36" transform="rotate(-24 1323 118)" />
        <path d="M1116 134H1132V116Q1140 108 1150 116L1216 194Q1222 202 1214 210L1156 280Q1140 292 1132 280V264H1060M1154 176Q1120 160 1110 200 1114 236 1152 230M1100 190H1130M1100 206H1130M1190 0Q1200 60 1240 66L1350 16M1470 32 1496 52M1500 220 1552 164 1568 170M1428 226 1568 290M1446 232 1434 336 1568 392M1446 226Q1454 206 1480 210 1500 240 1524 228 1552 260 1568 276" />
        <path d="M1110 416 1232 450 1138 512ZM1290 480 1312 360Q1316 346 1334 348L1456 370Q1474 374 1472 394L1458 480M1334 466V480M1380 440 1378 480M1426 406 1414 480" />
        <path d="M1060 745 1080 840M1200 745 1222 790 1276 770M1380 745 1360 810M1386 780 1434 790M1392 744 1446 754" />
        <Rings at={[[1296, 764, 21], [1220, 808, 21]]} />
      </g>

      <g transform="translate(525 350) scale(0.3444 0.3333)">
        <Rings at={[[241, 133], [336, 161, 20], [422, 91], [568, 104], [592, 232, 20], [210, 236, 20], [292, 278], [548, 350], [58, 211], [662, 311], [813, 311], [77, 447], [685, 37], [87, 150, 14], [125, 108, 10]]} />
        <Marks kind="spark" at={[[887, 166, 12], [238, 357, 10]]} />
        <path d="M0 70Q20 20 60 34 70 0 110 20 150 14 150 46 190 50 184 90 180 110 160 116 200 170 170 192 140 200 132 170L134 140M80 60Q50 70 60 96 80 110 90 90 90 124 110 120 140 130 150 96M0 140Q30 140 52 112M28 152Q20 180 60 184M70 186Q80 210 110 204 136 200 132 170M128 200 124 262M58 274Q90 254 110 278 140 260 150 290 150 310 138 324M0 268 152 332M0 372 72 404 136 328" />
        <path d="M222 0V60L348 102 376 20M280 40Q290 60 314 58 336 50 336 30M366 252 336 215Q340 196 356 204 370 186 384 196 400 186 406 194 420 190 420 206L406 246ZM366 252Q340 320 326 346 320 430 390 438 500 440 506 350 500 300 406 246M370 348Q350 330 366 312 388 302 398 334L440 338Q440 310 464 320 480 340 462 356 476 380 456 392 434 392 430 370L392 364Q386 392 366 386 350 376 370 348Z" />
        <path d="M440 184 464 124 Q468 116 480 120L520 138Q532 144 528 156L506 214 462 238ZM470 206 412 246M470 206 472 208" />
        <path d="M684 110Q696 70 720 82L800 116Q812 124 806 146L790 192Q810 206 802 222L712 260Q696 264 690 252L642 160Q638 148 650 146L668 152Z" />
        <path d="M624 368H704V450H624ZM582 450H624V492H582ZM742 338H778V374H742ZM778 374H824V416H778ZM124 476 132 416 300 444 292 480M254 438 248 480" />
      </g>

      <g transform="translate(525 80) scale(0.3444 0.3374)">
        <Rings at={[[58, 64, 20], [776, 512, 27], [757, 650], [650, 710, 20], [548, 716], [945, 742], [725, 783], [790, 806, 28], [50, 1341, 21], [411, 1284], [486, 1288, 20], [670, 1332, 20], [752, 1364], [849, 1414], [778, 1439, 20], [312, 1532, 20], [1063, 1495, 31], [544, 1468, 72], [544, 1468, 58], [856, 672, 17]]} />
        <Marks kind="lock" at={[[934, 1404, -12]]} />
        <Marks kind="trend" at={[[112, 1404, -6], [870, 1496, -6]]} />
        <path d="M796 630 862 516Q880 490 906 504L984 550Q1004 564 996 590L922 708 820 732ZM930 572Q910 550 880 566 866 590 904 600 940 606 930 624 906 640 876 620M904 540V636M840 680Q740 680 710 720 706 744 740 742 790 736 810 690" />
        <rect x="592" y="536" width="144" height="104" rx="52" />
        <rect x="446" y="536" width="136" height="104" rx="52" />
        <path d="M638 587H694M666 560V614M500 654H540Q570 650 580 620 600 660 640 656L690 654 714 636M480 572H552V614H480ZM500 572V558H528V614M574 512V480H614V512ZM540 640V656" />
        <rect x="136" y="498" width="140" height="34" rx="17" />
        <path d="M120 1262Q108 1340 140 1356 200 1380 250 1360 280 1340 290 1264M300 1264H326Q346 1280 340 1300 330 1318 300 1318L280 1312M230 1280 262 1286 256 1320 222 1314ZM250 1282V1264M584 1262V1288H624V1262M776 1274H810V1308H776Z" />
        <path d="M310 1412 370 1342Q382 1334 384 1354L386 1358H450Q474 1362 476 1388M310 1412 370 1478Q384 1490 386 1464H416M390 1412 570 1368Q650 1358 674 1430 690 1500 650 1548M390 1412Q420 1440 418 1480L436 1548M684 1496H704L710 1480 722 1480 776 1548M518 1444H566M520 1458H562M540 1442Q564 1450 550 1470L524 1472 552 1502" />
        <path d="M36 1550Q30 1490 70 1470L250 1432Q262 1430 258 1440L248 1462 262 1500V1550M82 1506 102 1508 118 1546M108 1512 184 1498 182 1524 116 1536" />
        <path d="M844 1292Q838 1310 856 1318L960 1286 M850 1290 950 1262M960 1280 1042 1412 1258 1344Q1262 1336 1250 1330L1054 1394 976 1266M1010 1340 1232 1274M1018 1274 1080 1380M1110 1264 1140 1364M1050 1414V1462M1064 1410V1462" />
        <path d="M0 1340 24 1440M0 1450 30 1446" />
      </g>
    </g>
  );
}

const Doodles = () => (
  <Wallpaper aria-hidden="true">
    <defs><Tile /></defs>
    {[-1, 0, 1, 2].map((col) =>
      [-1, 0, 1].map((row) => <use key={`${col},${row}`} href="#doodles" x={col * 810} y={row * 1440} />)
    )}
  </Wallpaper>
);

export default function App() {
  return (
    <Screen>
      <GlobalStyle />
      <Doodles />
      <TopBar><Avatar /></TopBar>
      <Thread>
        <Group $out>
          <Bubble out tail time="11:18 AM">bien</Bubble>
          <Bubble out time="11:18 AM">el de 320 por ahora está bien</Bubble>
        </Group>
        <Group>
          <Bubble tail time="11:19 AM">
            <Anchor>Perfecto<PenDot /></Anchor> Manuel, vamos con Acompañamiento por S/320.
          </Bubble>
          <Bubble time="11:19 AM">Para separar tu lugar, el adelanto es de S/100 por Yape o Plin:</Bubble>
          <Bubble time="11:19 AM">Yape: 919151237</Bubble>
          <Bubble time="11:19 AM">Plin: 919151237</Bubble>
          <Bubble layout="stacked" time="11:19 AM">
            Me envías la captura de pantalla por aquí y coordinamos tu primera sesión.
          </Bubble>
        </Group>
        <Group $out>
          <PhotoRow>
            <ForwardButton type="button" aria-label="Reenviar">
              <svg width="46" height="32" viewBox="0 0 138 96" fill="none" stroke="currentColor" strokeWidth="13" strokeLinecap="round" strokeLinejoin="round">
                <path d="M10 86V68Q12 38 42 38H88M64 10 94 38 64 68M96 10 126 38 96 68" />
              </svg>
            </ForwardButton>
            <ReceiptPhoto />
          </PhotoRow>
          <Bubble out time="11:27 AM">ahi envie el comprobante</Bubble>
          <Bubble out time="11:27 AM">transferí todo directamente los 320</Bubble>
        </Group>
        <Group>
          <Bubble tail layout="emoji" time="11:28 AM">
            <WithIcon $gap={9}><CheckEmoji />Listo. Ya derivé tu consulta con Alejandro.</WithIcon>
          </Bubble>
          <Bubble layout="emoji" time="11:28 AM">
            <WithIcon $gap={9}><MailEmoji />En breve se va a contactar por este mismo chat.</WithIcon>
          </Bubble>
          <Bubble layout="wrapped" time="11:28 AM">
            Si quieres, mientras tanto déjame un mensaje con el detalle puntual de tu consulta o cualquier dato extra que consideres importante.
          </Bubble>
          <Bubble layout="emoji" time="11:28 AM">
            <WithIcon $gap={7}>Gracias<HandsEmoji /></WithIcon>
          </Bubble>
          <NextBubble />
        </Group>
      </Thread>
      <ScrollButton type="button" aria-label="Ir al final" />
    </Screen>
  );
}
